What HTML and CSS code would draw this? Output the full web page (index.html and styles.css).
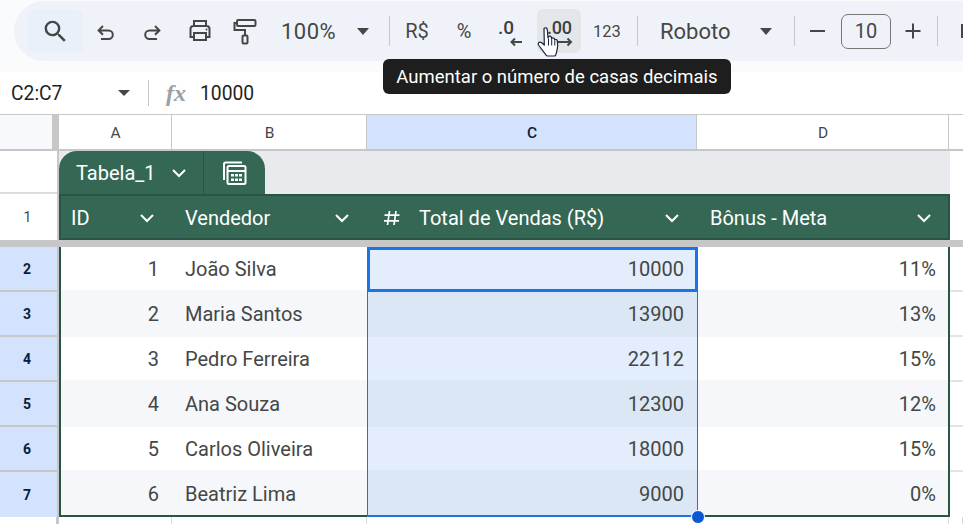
FILE: index.html
```html
<!DOCTYPE html>
<html lang="pt-BR">
<head>
<meta charset="utf-8">
<title>Planilha</title>
<link rel="stylesheet" href="styles.css">
</head>
<body>
<div class="app">
  <header class="top">
    <div class="pill">
      <span class="tb search"><svg width="29" height="29" viewBox="0 0 24 24"><path class="fill" d="M15.500 14h-.79l-.28-.27A6.471 6.471 0 0 0 16 9.500 6.500 6.500 0 1 0 9.500 16c1.610 0 3.090-.59 4.230-1.570l.27.28v.79l5 4.990L20.490 19l-4.990-5zm-6 0C7.010 14 5 11.990 5 9.500S7.010 5 9.500 5 14 7.010 14 9.500 11.990 14 9.500 14z"/></svg></span>
      <span class="tb w46 low"><svg width="22" height="22" viewBox="0 0 22 22"><path class="line" d="M8 4 3.600 8.400 8 12.800M4 8.400h9.500a4.300 4.300 0 0 1 0 8.600H6"/></svg></span>
      <span class="tb w46 low"><svg width="22" height="22" viewBox="0 0 22 22"><path class="line" d="M14 4l4.400 4.400L14 12.800M18 8.400H8.500a4.300 4.300 0 0 0 0 8.600H16"/></svg></span>
      <span class="tb w50"><svg width="26" height="26" viewBox="0 0 26 26"><path class="line" d="M7 8V3h12v5M7 19H3.500v-8a3 3 0 0 1 3-3h13a3 3 0 0 1 3 3v8H19M7 15h12v7H7z"/><circle class="fill" cx="19.500" cy="11.500" r="1"/></svg></span>
      <span class="tb w40"><svg width="24" height="27" viewBox="0 0 24 27"><rect class="line" x="4" y="2" width="18.500" height="6" rx="1.200"/><path class="line" d="M4 5H1.500v7h10.500v5"/><rect class="line" x="9.500" y="17.500" width="5" height="8" rx="1"/></svg></span>
      <span class="zoom">100%</span>
      <span class="caret gapz"></span>
      <span class="sep sep1"></span>
      <span class="sym rs">R$</span>
      <span class="sym pc">%</span>
      <span class="dec less">.0<svg class="arr" width="14" height="12" viewBox="0 0 14 12"><path class="line" d="M13 6H2.500M6 2.500 2.500 6 6 9.500"/></svg></span>
      <span class="dec more">.00<svg class="arr" width="22" height="12" viewBox="0 0 22 12"><path class="line" d="M2 6h17M15.500 2.500 19 6l-3.500 3.500"/></svg></span>
      <span class="sym n123">123</span>
      <span class="sep sep2"></span>
      <span class="font">Roboto</span>
      <span class="caret gapf"></span>
      <span class="sep sep3"></span>
      <span class="step minus"><svg width="20" height="20" viewBox="0 0 20 20"><path class="line" d="M2 10h15"/></svg></span>
      <span class="size">10</span>
      <span class="step plus"><svg width="20" height="20" viewBox="0 0 20 20"><path class="line" d="M2.500 10h15M10 2.500v15"/></svg></span>
      <span class="sep sep4"></span>
      <span class="nextstem"></span>
    </div>
  </header>

  <div class="formula">
    <span class="namebox">C2:C7</span>
    <span class="caret dark"></span>
    <span class="sep fsep"></span>
    <span class="fx">fx</span>
    <span class="fval">10000</span>
  </div>

  <main class="sheet">
    <div class="colhead">
      <div class="corner"></div>
      <div class="ch">A</div>
      <div class="ch">B</div>
      <div class="ch on">C</div>
      <div class="ch">D</div>
      <div class="ch end"></div>
    </div>

    <div class="frozen">
      <div class="rh-frozen">
        <div class="rh-tab"></div>
        <div class="rh-one">1</div>
      </div>
      <div class="tabletop">
        <div class="tabstrip">
          <div class="tab">
            <span class="tabname">Tabela_1</span>
            <svg class="chev tabchev" width="16" height="10" viewBox="0 0 16 10"><path d="M2 2l6 6 6-6"/></svg>
            <span class="tabdiv"></span>
            <svg class="calc" width="26" height="26" viewBox="0 0 26 26"><path class="cl" d="M2 20V4a1.500 1.500 0 0 1 1.500-1.500H20"/><rect class="cl" x="5.500" y="6" width="18" height="18" rx="1.500"/><path class="cl" d="M5.500 11h18"/><path class="dots" d="M9 14h3v2.500H9zM13 14h3v2.500h-3zM17 14h3v2.500h-3zM9 18.500h3V21H9zM13 18.500h3V21h-3zM17 18.500h3V21h-3z"/></svg>
          </div>
        </div>
        <div class="thead">
          <div class="th tha"><span>ID</span><svg class="chev" width="16" height="10" viewBox="0 0 16 10"><path d="M2 2l6 6 6-6"/></svg></div>
          <div class="th thb"><span>Vendedor</span><svg class="chev" width="16" height="10" viewBox="0 0 16 10"><path d="M2 2l6 6 6-6"/></svg></div>
          <div class="th thc"><svg class="hash" width="18" height="18" viewBox="0 0 18 18"><path d="M6.500 2 4.500 16M13 2l-2 14M1.500 6.200h15M1 11.800h15"/></svg><span>Total de Vendas (R$)</span><svg class="chev" width="16" height="10" viewBox="0 0 16 10"><path d="M2 2l6 6 6-6"/></svg></div>
          <div class="th thd"><span>Bônus - Meta</span><svg class="chev" width="16" height="10" viewBox="0 0 16 10"><path d="M2 2l6 6 6-6"/></svg></div>
        </div>
      </div>
      <div class="frozen-end"></div>
    </div>
    <div class="freezebar"></div>

    <div class="rows">
      <div class="row"><div class="rh">2</div><div class="c r first">1</div><div class="c l">João Silva</div><div class="c r s">10000</div><div class="c r pct">11%</div><div class="e"></div></div>
      <div class="row alt"><div class="rh">3</div><div class="c r first">2</div><div class="c l">Maria Santos</div><div class="c r s">13900</div><div class="c r pct">13%</div><div class="e"></div></div>
      <div class="row"><div class="rh">4</div><div class="c r first">3</div><div class="c l">Pedro Ferreira</div><div class="c r s">22112</div><div class="c r pct">15%</div><div class="e"></div></div>
      <div class="row alt"><div class="rh">5</div><div class="c r first">4</div><div class="c l">Ana Souza</div><div class="c r s">12300</div><div class="c r pct">12%</div><div class="e"></div></div>
      <div class="row"><div class="rh">6</div><div class="c r first">5</div><div class="c l">Carlos Oliveira</div><div class="c r s">18000</div><div class="c r pct">15%</div><div class="e"></div></div>
      <div class="row alt last"><div class="rh">7</div><div class="c r first">6</div><div class="c l">Beatriz Lima</div><div class="c r s">9000</div><div class="c r pct">0%</div><div class="e"></div></div>
      <div class="selection"></div>
      <div class="active"></div>
      <div class="handle"></div>
    </div>
    <div class="below">
      <div></div><div></div><div></div><div></div><div></div><div></div>
    </div>
  </main>

  <div class="tooltip">Aumentar o número de casas decimais</div>
  <svg class="hand" width="26" height="34" viewBox="0 0 26 34"><path d="M7 2.500c1.200-1.300 3-.8 3.300 1l.7 8.500 .6-1.500c1-.8 2.300-.5 2.700.7l.3 1.300c.8-1 2.300-.9 2.800.3l.2 1c1-.6 2.400-.2 2.700 1 .6 3 .5 6.500-.3 9.500l-1 4c-.2 1-1 1.700-2 1.700H11c-1 0-1.800-.5-2.300-1.300L1.500 19c-.8-1.300.2-3 1.800-2.800 1.200.1 2.500 1.500 4 2.800z" fill="#fff" stroke="#1a2238" stroke-width="1.200" stroke-linejoin="round"/><path d="M11.500 12.500v7M14.700 13v6.500M17.800 14.500v5" fill="none" stroke="#1a2238" stroke-width="1"/></svg>
</div>
</body>
</html>
```

FILE: styles.css
```css
* { box-sizing: border-box; }
html, body { margin: 0; padding: 0; background: #fff; }
body { width: 963px; height: 524px; overflow: hidden; font-family: Roboto, "Liberation Sans", sans-serif; color: #444746; }
.app { position: relative; width: 963px; height: 524px; overflow: hidden; }

.top { height: 72px; background: #f9fbfd; padding: 1px 0 0 14px; }
.pill { height: 60px; width: 1000px; background: #eff3f9; border-radius: 30px 0 0 30px; display: flex; align-items: center; padding-left: 14px; }
.fill { fill: #444746; }
.line { fill: none; stroke: #444746; stroke-width: 2; }
.tb { display: flex; align-items: center; justify-content: center; flex: none; height: 42px; }
.search { width: 55px; background: #e9f0f9; border-radius: 4px; }
.low svg { margin-top: 3px; }
.w46 { width: 46px; }
.w50 { width: 50px; }
.w40 { width: 40px; }
.zoom { margin-left: 16px; width: 56px; font-size: 22px; letter-spacing: .5px; flex: none; }
.caret { width: 0; height: 0; border-left: 6.500px solid transparent; border-right: 6.500px solid transparent; border-top: 7px solid #444746; flex: none; }
.gapz { margin-left: 20px; }
.sep { width: 1px; background: #c7c7c7; flex: none; }
.sep1 { height: 30px; margin-left: 20px; }
.sym { flex: none; font-size: 20px; text-align: center; font-weight: 400; }
.rs { margin-left: 13px; width: 28px; }
.pc { margin-left: 22px; width: 22px; }
.dec { position: relative; flex: none; height: 44px; font-weight: 500; font-size: 19px; line-height: 37px; color: #3c4043; }
.arr { position: absolute; }
.less { margin-left: 23px; width: 39px; }
.less .arr { left: 11px; top: 27px; }
.more { width: 44px; background: #e4e7ea; border-radius: 6px; padding-left: 10px; font-size: 18px; letter-spacing: -.3px; }
.more .arr { left: 15px; top: 27px; }
.n123 { margin-left: 12px; width: 28px; font-size: 16.500px; }
.sep2 { height: 30px; margin-left: 16px; }
.font { margin-left: 22px; width: 71px; font-size: 22px; flex: none; }
.gapf { margin-left: 29px; }
.sep3 { height: 30px; margin-left: 22px; }
.step { flex: none; width: 20px; height: 20px; display: block; }
.step svg { display: block; }
.minus { margin-left: 13px; }
.size { margin-left: 13px; width: 50px; height: 35px; border: 1px solid #747775; border-radius: 7px; font-size: 20px; line-height: 33px; text-align: center; flex: none; }
.plus { margin-left: 12px; }
.sep4 { height: 30px; margin-left: 14px; }
.nextstem { margin-left: 23px; width: 3px; height: 14px; background: #444746; flex: none; }

.formula { height: 42px; display: flex; align-items: center; color: #1f1f1f; background: #fff; font-size: 19.300px; }
.namebox { margin-left: 11px; width: 107px; flex: none; }
.caret.dark { border-top-width: 6.500px; }
.fsep { height: 26px; margin-left: 18px; }
.fx { margin-left: 17px; width: 34px; font-family: "Liberation Serif", serif; font-style: italic; font-weight: 700; font-size: 24px; color: #9aa0a6; flex: none; }
.fval { flex: none; }

.sheet { position: relative; }
.colhead, .below { display: grid; grid-template-columns: 59px 113px 195px 330px 252px 14px; }
.row { display: grid; grid-template-columns: 59px 113px 195px 330px 253px 13px; }
.colhead { height: 37px; border-top: 1px solid #c7c7c7; border-bottom: 2px solid #c7c7c7; }
.corner { background: #f8f9fd; border-right: 7px solid #c7c7c7; width: 59px; }
.ch { font-size: 15.500px; display: flex; align-items: center; justify-content: center; border-right: 1px solid #c7c7c7; color: #444746; background: #fff; padding: 1px 0 0 1px; }
.ch.on { background: #d3e3fd; color: #0b1d3a; font-weight: 500; }
.ch.end { border-right: 0; }

.frozen { height: 89px; display: flex; }
.rh-frozen { width: 59px; flex: none; border-right: 2px solid #c7c7c7; background: #fff; }
.rh-tab { height: 43px; border-bottom: 2px solid #dadce0; }
.rh-one { height: 46px; display: flex; align-items: center; justify-content: center; font-size: 14px; color: #444746; padding-right: 2px; }
.tabletop { width: 891px; flex: none; }
.tabstrip { height: 43px; background: #e8eaed; }
.tab { width: 206px; height: 43px; background: #356854; border-radius: 18px 18px 0 0; color: #fff; display: flex; align-items: center; }
.tabname { margin-left: 17px; font-size: 20px; width: 85px; flex: none; }
.chev { flex: none; }
.chev path { fill: none; stroke: #fff; stroke-width: 2; }
.tabchev { margin-left: 10px; }
.tabdiv { width: 1px; height: 43px; background: #2a5444; margin-left: 16px; flex: none; }
.calc { margin-left: 18px; flex: none; }
.cl { fill: none; stroke: #fff; stroke-width: 2; }
.dots { fill: #fff; }
.thead { height: 46px; background: #356854; border: 2px solid #2a5444; display: grid; grid-template-columns: 112px 195px 330px 252px; color: #fff; font-size: 20px; font-weight: 400; }
.th { display: flex; align-items: center; justify-content: space-between; padding: 1px 18px 0 10px; }
.thb { padding-left: 12px; padding-right: 18px; }
.thc { padding-left: 15px; padding-right: 18px; }
.hash { flex: none; margin-right: 18px; }
.hash path { fill: none; stroke: #fff; stroke-width: 1.700; }
.thc span { flex: 1; }
.thd { padding-left: 12px; padding-right: 18px; }
.frozen-end { flex: 1; background: #fff; }
.freezebar { height: 7px; background: #c7c7c7; }

.rows { position: relative; }
.row { height: 45px; font-size: 20px; color: #444746; }
.rh { background: #d3e3fd; border-bottom: 2px solid #c7c7c7; border-right: 2px solid #c7c7c7; color: #0b1d3a; font-weight: 700; font-size: 14px; display: flex; align-items: center; justify-content: center; padding-right: 3px; }
.row.last .rh { border-bottom: 0; }
.c { display: flex; align-items: center; background: #fff; padding-bottom: 2px; }
.alt .c { background: #f5f7fa; margin-top: -2px; padding-top: 2px; padding-bottom: 2px; }
.c.r { justify-content: flex-end; padding-right: 13px; }
.c.l { padding-left: 13px; }
.c.s { background: #e3edfb; }
.alt .c.s { background: #dce7f5; }
.first { border-left: 2px solid #2a5444; }
.c.pct { border-right: 2px solid #2a5444; padding-right: 12px; }
.e { border-bottom: 2px solid #e4e4e4; }
.last .c { border-bottom: 2px solid #2a5444; padding-bottom: 0; }
.last .e { border-bottom: 0; }

.selection { position: absolute; left: 367px; top: 0; width: 331px; height: 270px; border: 1px solid #1a73e8; border-bottom-width: 2px; border-top: 0; }
.active { position: absolute; left: 367px; top: 0; width: 331px; height: 45px; border: 3px solid #1a73e8; }
.handle { position: absolute; left: 691px; top: 263px; width: 14px; height: 14px; border-radius: 50%; background: #0b57d0; border: 1px solid #fff; }

.below { height: 20px; }
.below div { border-right: 1px solid #dadce0; }
.below div:first-child { border-right: 3px solid #c7c7c7; }

.tooltip { position: absolute; left: 383px; top: 59px; width: 348px; height: 35px; border-radius: 6px; background: #1e1e1e; color: #fff; font-size: 18.500px; display: flex; align-items: center; justify-content: center; }
.hand { position: absolute; left: 537px; top: 26px; }
```
